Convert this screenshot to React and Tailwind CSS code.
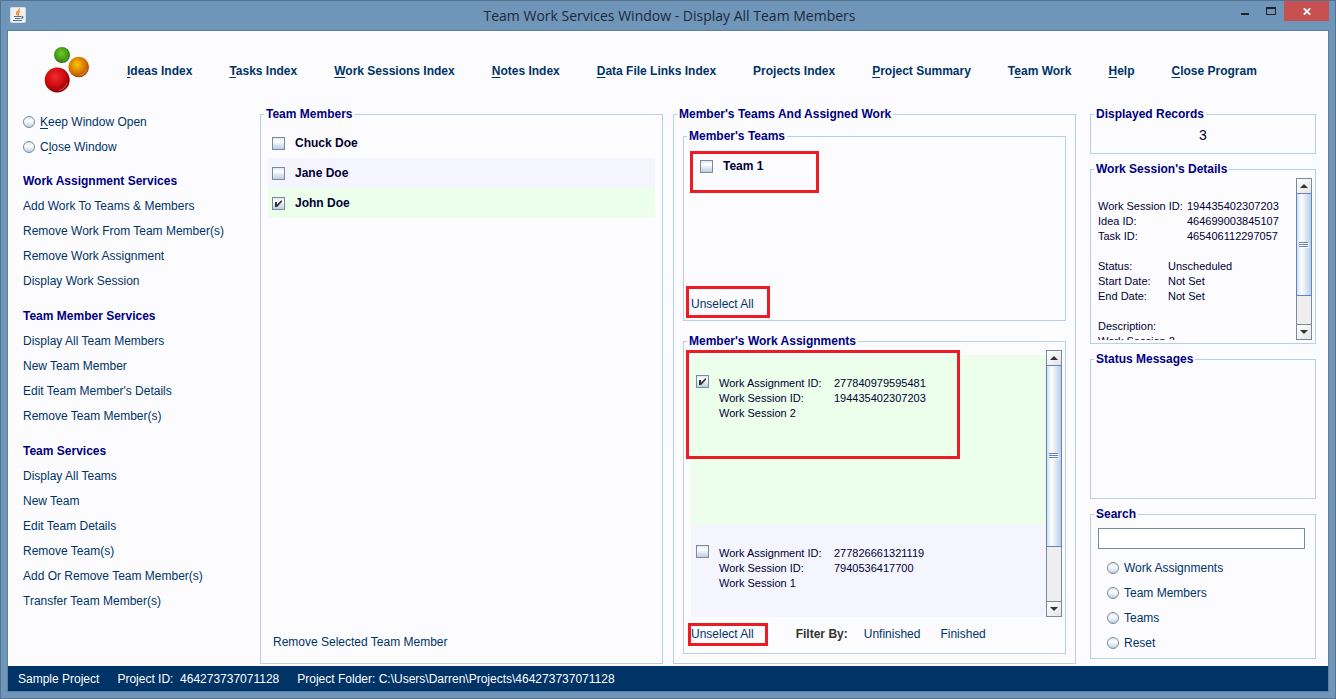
import { useState } from "react";

const NAV_ITEMS = [
  { key: "I", rest: "deas Index" },
  { key: "T", rest: "asks Index" },
  { key: "W", rest: "ork Sessions Index" },
  { key: "N", rest: "otes Index" },
  { key: "D", rest: "ata File Links Index" },
  { key: "", rest: "Projects Index" },
  { key: "P", rest: "roject Summary" },
  { before: "T", key: "e", rest: "am Work" },
  { key: "H", rest: "elp" },
  { key: "C", rest: "lose Program" },
];

const SERVICES = [
  {
    title: "Work Assignment Services",
    items: [
      "Add Work To Teams & Members",
      "Remove Work From Team Member(s)",
      "Remove Work Assignment",
      "Display Work Session",
    ],
  },
  {
    title: "Team Member Services",
    items: [
      "Display All Team Members",
      "New Team Member",
      "Edit Team Member's Details",
      "Remove Team Member(s)",
    ],
  },
  {
    title: "Team Services",
    items: [
      "Display All Teams",
      "New Team",
      "Edit Team Details",
      "Remove Team(s)",
      "Add Or Remove Team Member(s)",
      "Transfer Team Member(s)",
    ],
  },
];

const MEMBERS = ["Chuck Doe", "Jane Doe", "John Doe"];

const ASSIGNMENTS = [
  { id: "277840979595481", session: "194435402307203", name: "Work Session 2" },
  { id: "277826661321119", session: "7940536417700", name: "Work Session 1" },
];

const SEARCH_TYPES = ["Work Assignments", "Team Members", "Teams", "Reset"];

function Panel({ title, className, children }) {
  return (
    <fieldset className={`flex min-w-0 flex-col border border-[#b8cfe5] ${className}`}>
      <legend className="ml-[3px] px-0.5 text-xs font-bold leading-4 text-[#000080]">{title}</legend>
      {children}
    </fieldset>
  );
}

function CheckBox({ id, checked, onChange, label }) {
  return (
    <span className="relative block size-[13px] shrink-0">
      <input
        id={id}
        type="checkbox"
        aria-label={label}
        checked={checked}
        onChange={onChange}
        className="block size-[13px] appearance-none border border-[#7a8a99] bg-linear-to-b from-[#dde8f3] via-white via-30% to-[#b8cfe5]"
      />
      {checked && (
        <svg viewBox="0 0 13 13" className="pointer-events-none absolute inset-0 size-[13px]">
          <path d="M3 5h2v2.5L9 3.5h1v1.2L5.2 10H3z" fill="#333" />
        </svg>
      )}
    </span>
  );
}

function Radio({ name, checked, onChange, children }) {
  return (
    <label className="flex h-[25px] items-center gap-[5px] text-xs text-[#003366]">
      <input
        type="radio"
        name={name}
        checked={checked}
        onChange={onChange}
        className="size-3 appearance-none rounded-full border border-[#7a8a99] bg-linear-to-b from-[#dde8f3] via-white via-40% to-[#b8cfe5] checked:bg-[#7a8a99]"
      />
      <span>{children}</span>
    </label>
  );
}

function ScrollBar({ thumb }) {
  return (
    <div className="flex w-4 shrink-0 flex-col border-l border-r border-[#7a8a99] bg-[#eee]">
      <button
        type="button"
        aria-label="Scroll up"
        className="flex h-[15px] shrink-0 items-center justify-center border-t border-[#7a8a99] bg-linear-to-br from-white to-[#e4e4e4]"
      >
        <svg viewBox="0 0 8 4" className="h-1 w-2" fill="#333">
          <path d="M0 4L4 0l4 4z" />
        </svg>
      </button>
      <div className="min-h-0 flex-1">
        <div
          className={`-mx-px flex items-center justify-center border border-[#6382bf] bg-linear-to-r from-[#cfdeec] via-white via-30% to-[#b8cfe5] ${thumb}`}
        >
          <svg viewBox="0 0 10 6" className="h-1.5 w-2.5" shapeRendering="crispEdges">
            <path d="M0 .5h9M0 2.5h9M0 4.5h9" stroke="#6382bf" />
            <path d="M1 1.5h9M1 3.5h9M1 5.5h9" stroke="#fff" />
          </svg>
        </div>
      </div>
      <button
        type="button"
        aria-label="Scroll down"
        className="flex h-4 shrink-0 items-center justify-center border-y border-[#7a8a99] bg-linear-to-br from-white to-[#e4e4e4]"
      >
        <svg viewBox="0 0 8 4" className="h-1 w-2" fill="#333">
          <path d="M0 0h8L4 4z" />
        </svg>
      </button>
    </div>
  );
}

function Highlight({ className }) {
  return <span className={`pointer-events-none absolute z-10 border-3 border-[#ed1c24] ${className}`} />;
}

function JavaIcon() {
  return (
    <svg viewBox="0 0 16 16" className="size-4">
      <rect x=".5" y=".5" width="15" height="15" rx="1" fill="#f1f1ef" stroke="#d5dbe0" />
      <path d="M9.5 1.5C10 3.5 6 4.5 6.5 6.5c.2.9 1 1.3 1 2M10 4.5C8 5.5 8 6.2 8.6 7c.4.6 0 1.2-.4 1.5" fill="none" stroke="#e8842c" strokeWidth="1.3" />
      <path d="M4 9.5h7M5 11.5h5.500M3 13.5h9M11.5 9.5c1.8-.4 1.8 1.5-.3 2" fill="none" stroke="#4a7394" strokeWidth="1.2" />
    </svg>
  );
}

function Logo() {
  return (
    <svg viewBox="0 0 46 48" className="h-12 w-[46px]">
      <defs>
        <radialGradient id="green" cx=".45" cy=".4" r=".6">
          <stop offset="0" stopColor="#73c92c" />
          <stop offset=".6" stopColor="#4a9f16" />
          <stop offset="1" stopColor="#2d7209" />
        </radialGradient>
        <radialGradient id="orange" cx=".42" cy=".38" r=".65">
          <stop offset="0" stopColor="#fbc800" />
          <stop offset=".5" stopColor="#dc8500" />
          <stop offset="1" stopColor="#ab4500" />
        </radialGradient>
        <radialGradient id="red" cx=".42" cy=".36" r=".65">
          <stop offset="0" stopColor="#f42a2c" />
          <stop offset=".55" stopColor="#cf0d12" />
          <stop offset="1" stopColor="#870003" />
        </radialGradient>
      </defs>
      <circle cx="18" cy="10" r="8" fill="url(#green)" />
      <circle cx="34.7" cy="22" r="10.3" fill="url(#orange)" />
      <circle cx="13.2" cy="35" r="12.5" fill="url(#red)" />
      <path d="M35.5 30.300a8.500 8.500 0 0 0 7-6" fill="none" stroke="#e9a86a" strokeWidth=".7" />
      <path d="M15 45.300a10.500 10.500 0 0 0 8-7" fill="none" stroke="#e66a6a" strokeWidth=".8" />
      <path d="M19 16.300a6.300 6.300 0 0 0 4.700-4.300" fill="none" stroke="#7fbc5e" strokeWidth=".6" />
    </svg>
  );
}

function TitleBar() {
  return (
    <header className="flex h-[29px] shrink-0 items-start pl-[9px] pr-1.5">
      <div className="flex w-24 pt-1.5">
        <JavaIcon />
      </div>
      <h1 className="flex-1 text-center font-['Open_Sans',sans-serif] text-sm leading-[29px] text-[#1b2a38]">
        Team Work Services Window - Display All Team Members
      </h1>
      <div className="flex w-24">
        <button type="button" aria-label="Minimize" className="flex h-5 w-6 items-center justify-center">
          <svg viewBox="0 0 10 10" className="size-2.5" shapeRendering="crispEdges">
            <path d="M1 7h8v2H1z" fill="#222" />
          </svg>
        </button>
        <button type="button" aria-label="Maximize" className="flex h-5 w-[27px] items-center justify-center">
          <svg viewBox="0 0 10 8" className="h-2 w-2.5" shapeRendering="crispEdges">
            <path d="M0 0h10v8H0zM1 2v5h8V2z" fill="#222" fillRule="evenodd" />
          </svg>
        </button>
        <button type="button" aria-label="Close" className="flex h-5 w-[45px] items-center justify-center bg-[#c75050]">
          <svg viewBox="0 0 8 7" className="h-[7px] w-2">
            <path d="M.8.3l6.4 6.4M7.2.3L.8 6.700" stroke="#fff" strokeWidth="1.8" />
          </svg>
        </button>
      </div>
    </header>
  );
}

function SideBar() {
  const [mode, setMode] = useState("");

  return (
    <aside className="w-[252px] shrink-0 pl-[15px] pt-[3px] text-xs text-[#003366]">
      <Radio name="window" checked={mode === "keep"} onChange={() => setMode("keep")}>
        <u className="underline-offset-2">K</u>eep Window Open
      </Radio>
      <Radio name="window" checked={mode === "close"} onChange={() => setMode("close")}>
        C<u className="underline-offset-2">l</u>ose Window
      </Radio>
      {SERVICES.map((group) => (
        <section key={group.title} className="mt-2.5">
          <h2 className="text-xs font-bold leading-[25px] text-[#000080]">{group.title}</h2>
          <ul>
            {group.items.map((item) => (
              <li key={item} className="h-[25px] leading-[25px]">
                <a href="#">{item}</a>
              </li>
            ))}
          </ul>
        </section>
      ))}
    </aside>
  );
}

function TeamMembers() {
  const [selected, setSelected] = useState("John Doe");

  return (
    <Panel title="Team Members" className="flex-1">
      <ul className="px-[7px] pt-1.5">
        {MEMBERS.map((member, i) => {
          const isSelected = member === selected;
          const stripe = i % 2 ? "bg-[#f5f5ff]" : "";
          return (
            <li key={member} className={isSelected ? "bg-[#ebffeb]" : stripe}>
              <label className="flex h-[30px] items-center gap-2.5 pl-1 text-xs font-bold text-[#000033]">
                <CheckBox checked={isSelected} onChange={() => setSelected(isSelected ? "" : member)} />
                {member}
              </label>
            </li>
          );
        })}
      </ul>
      <div className="mt-auto px-3 pb-[11px]">
        <button type="button" className="block text-xs leading-5 text-[#003366]">
          Remove Selected Team Member
        </button>
      </div>
    </Panel>
  );
}

function MemberTeams() {
  const [checked, setChecked] = useState(false);

  return (
    <Panel title="Member's Teams" className="shrink-0">
      <div className="relative mt-[7px] px-1.5">
        <Highlight className="left-1.5 top-0 h-[42px] w-[129px]" />
        <label className="flex h-[30px] items-center gap-2.5 pl-2.5 text-xs font-bold text-[#000033]">
          <CheckBox checked={checked} onChange={() => setChecked(!checked)} />
          Team 1
        </label>
      </div>
      <div className="mt-[113px] flex px-[7px] pb-1.5">
        <div className="relative">
          <Highlight className="-left-[5px] -right-4 -bottom-1 -top-2" />
          <button type="button" onClick={() => setChecked(false)} className="block text-xs leading-5 text-[#003366]">
            Unselect All
          </button>
        </div>
      </div>
    </Panel>
  );
}

function WorkAssignments() {
  const [selected, setSelected] = useState("277840979595481");

  return (
    <Panel title="Member's Work Assignments" className="min-h-0 flex-1">
      <div className="relative mt-px flex min-h-0 flex-1 pl-[7px] pr-[3px]">
        <Highlight className="left-0.5 top-0 h-[109px] w-[274px]" />
        <ul className="min-w-0 flex-1 overflow-hidden pt-[5px]">
          {ASSIGNMENTS.map((item) => {
            const isSelected = item.id === selected;
            return (
              <li
                key={item.id}
                className={`flex h-[170px] gap-2.5 pl-[5px] pt-5 ${isSelected ? "bg-[#ebffeb]" : "bg-[#f5f5ff]"}`}
              >
                <CheckBox
                  id={item.id}
                  checked={isSelected}
                  onChange={() => setSelected(isSelected ? "" : item.id)}
                />
                <label
                  htmlFor={item.id}
                  className="grid grid-cols-[115px_auto] content-start pt-px text-[11px] leading-[15px] text-[#000033]"
                >
                  <span>Work Assignment ID:</span>
                  <span>{item.id}</span>
                  <span>Work Session ID:</span>
                  <span>{item.session}</span>
                  <span>{item.name}</span>
                </label>
              </li>
            );
          })}
        </ul>
        <ScrollBar thumb="h-[77%]" />
      </div>
      <div className="flex h-9 shrink-0 items-start pl-[7px] pt-[7px] text-xs leading-5 text-[#003366]">
        <div className="relative">
          <Highlight className="-left-[3px] -right-3.5 -bottom-0.5 -top-px" />
          <button type="button" onClick={() => setSelected("")} className="block">
            Unselect All
          </button>
        </div>
        <span className="ml-[42px] font-bold text-[#333]">Filter By:</span>
        <button type="button" className="ml-4">Unfinished</button>
        <button type="button" className="ml-5">Finished</button>
      </div>
    </Panel>
  );
}

function SessionDetails() {
  return (
    <Panel title="Work Session's Details" className="shrink-0">
      <div className="mb-[3px] mt-px flex h-[162px] pl-[7px] pr-[3px]">
        <div className="min-w-0 flex-1 overflow-hidden pt-[21px] text-[11px] leading-[15px] text-[#000033]">
          <dl className="grid grid-cols-[89px_auto]">
            <dt>Work Session ID:</dt>
            <dd>194435402307203</dd>
            <dt>Idea ID:</dt>
            <dd>464699003845107</dd>
            <dt>Task ID:</dt>
            <dd>465406112297057</dd>
          </dl>
          <dl className="mt-[15px] grid grid-cols-[70px_auto]">
            <dt>Status:</dt>
            <dd>Unscheduled</dd>
            <dt>Start Date:</dt>
            <dd>Not Set</dd>
            <dt>End Date:</dt>
            <dd>Not Set</dd>
          </dl>
          <p className="mt-[15px]">Description:</p>
          <p>Work Session 2</p>
        </div>
        <ScrollBar thumb="h-[79%]" />
      </div>
    </Panel>
  );
}

function Search() {
  const [query, setQuery] = useState("");
  const [type, setType] = useState("");

  return (
    <Panel title="Search" className="shrink-0">
      <div className="pb-[3px] pl-[7px] pr-2.5 pt-1.5">
        <input
          type="text"
          aria-label="Search"
          value={query}
          onChange={(e) => setQuery(e.target.value)}
          className="block h-[21px] w-full border border-[#7a8a99] bg-white px-1 text-xs"
        />
        <div className="mt-1.5 pl-[9px]">
          {SEARCH_TYPES.map((item) => (
            <Radio key={item} name="search" checked={type === item} onChange={() => setType(item)}>
              {item}
            </Radio>
          ))}
        </div>
      </div>
    </Panel>
  );
}

export default function App() {
  return (
    <div className="flex h-screen flex-col border border-[#4f7391] bg-[#6f95b9] font-['Liberation_Sans',Arial,sans-serif]">
      <TitleBar />
      <div className="mx-1.5 mb-1.5 flex min-h-0 flex-1 flex-col border border-[#5a7f9f] bg-[#fcfcfe]">
        <div className="flex h-[75px] shrink-0 items-center pl-9">
          <Logo />
          <nav className="flex gap-[37px] whitespace-nowrap pb-px pl-[37px] pt-1.5 text-xs font-bold leading-5 text-[#003366]">
            {NAV_ITEMS.map((item) => (
              <a key={item.rest} href="#">
                {item.before}
                <u className="underline-offset-2">{item.key}</u>
                {item.rest}
              </a>
            ))}
          </nav>
        </div>

        <main className="flex min-h-0 flex-1 pb-0.5 pr-3">
          <SideBar />
          <div className="flex min-w-0 flex-1 gap-2.5">
            <TeamMembers />
            <Panel title="Member's Teams And Assigned Work" className="flex-1">
              <div className="flex min-h-0 flex-1 flex-col gap-3 px-[9px] pb-[9px] pt-1.5">
                <MemberTeams />
                <WorkAssignments />
              </div>
            </Panel>
          </div>
          <div className="ml-3.5 flex w-[226px] shrink-0 flex-col gap-[7px] pb-[5px]">
            <Panel title="Displayed Records" className="shrink-0">
              <p className="pb-2 pt-[3px] text-center text-sm leading-5 text-[#000033]">3</p>
            </Panel>
            <SessionDetails />
            <Panel title="Status Messages" className="min-h-0 flex-1" />
            <Search />
          </div>
        </main>

        <footer className="flex h-[25px] shrink-0 items-center gap-[18px] bg-[#003366] px-2.5 text-xs text-white">
          <span>Sample Project</span>
          <span className="whitespace-pre">Project ID:  464273737071128</span>
          <span>Project Folder: C:\Users\Darren\Projects\464273737071128</span>
        </footer>
      </div>
    </div>
  );
}
